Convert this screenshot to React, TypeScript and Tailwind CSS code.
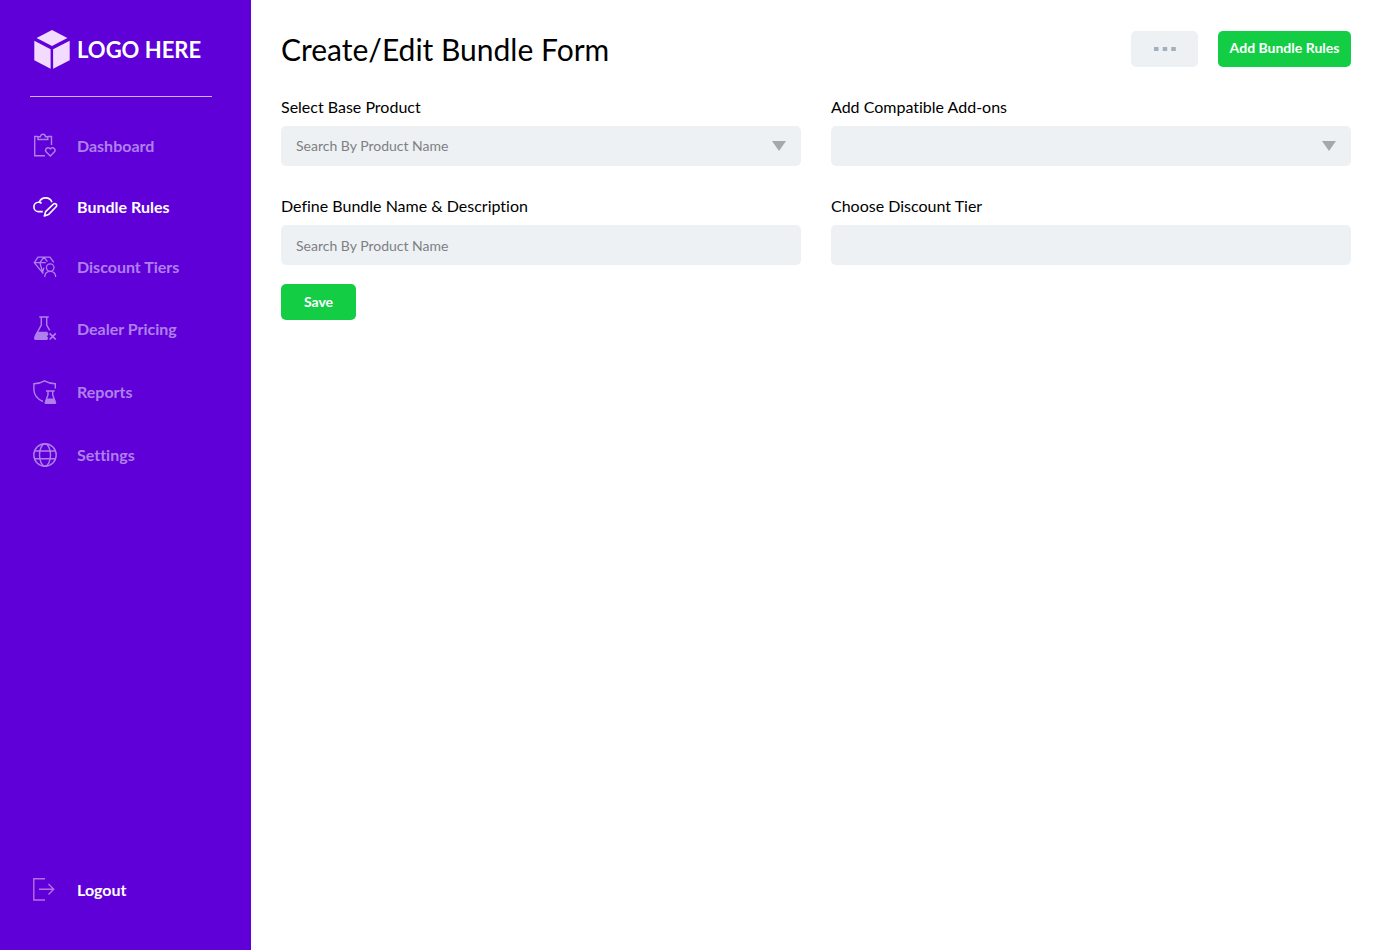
import clsx from 'clsx'
import React, { useState } from 'react'

interface NavItem {
	id: string
	label: string
	icon: React.ReactNode
}

const ClipboardHeartIcon = () => (
	<svg width="25" height="25" viewBox="0 0 25 25" fill="none" stroke="currentColor" strokeWidth="1.4" aria-hidden="true">
		<path d="M5 3.5H1.7v19.200h10.2M14.6 3.5h3.9v8.4" />
		<path d="M5 6.5V3.8h2.4a2.5 2.5 0 0 1 5 0h2.4v2.7z" />
		<path d="M17.3 23l-4-3.9a2.7 2.7 0 0 1 0-3.6 2.6 2.6 0 0 1 4 .3 2.6 2.6 0 0 1 4-.3 2.7 2.7 0 0 1 0 3.6z" />
	</svg>
)

const CloudPencilIcon = () => (
	<svg width="25" height="20" viewBox="0 0 25 20" fill="none" stroke="currentColor" strokeWidth="1.6" strokeLinejoin="round" aria-hidden="true">
		<path d="M9.8 14.6H5.7C2.9 14.6.9 12.5.9 9.9s2-4.7 4.6-4.7c1.3 0 2.3.4 3.1 1.1M6.3 5.3C7.2 2.7 9.6.9 12.6.9c3.1 0 5.4 1.6 6.3 4.3" />
		<path d="M11.4 18.9l1.2-4.3 7.8-7.5a1.9 1.9 0 0 1 2.7 0 1.9 1.9 0 0 1 0 2.7l-7.6 7.8z" />
	</svg>
)

const DiamondUserIcon = () => (
	<svg width="25" height="21" viewBox="0 0 25 21" fill="none" stroke="currentColor" strokeWidth="1.3" aria-hidden="true">
		<path d="M10.6 17.2L9.4 16.6 1.3 6.7 5 1.1h12l3.8 5.2M1.3 6.7h11.5M11 1.1L6.9 6.7l2.7 9.6 1.3-4.5M11 1.1l3.4 4.5" />
		<circle cx="17.2" cy="11.6" r="3.8" />
		<path d="M11.7 21c.2-3.3 2.4-5.6 5.5-5.6s5.3 2.3 5.5 5.6" />
	</svg>
)

const FlaskCrossIcon = () => (
	<svg width="25" height="25" viewBox="0 0 25 25" fill="none" stroke="currentColor" strokeWidth="1.4" aria-hidden="true">
		<path d="M6.3 1h9.4M8.3 1v8L2 20.5M13.7 1v8l3 5.4" />
		<path d="M4 15.8h10.3l1.1 2.5-1.4 2.2 1.2 1.3-.9 2.2H2.8c-1.6 0-2.3-1.5-1.5-2.9z" fill="currentColor" stroke="none" />
		<path d="M16.6 17.3l6.2 6.2M22.8 17.3l-6.2 6.2" strokeWidth="1.7" />
	</svg>
)

const ShieldFlaskIcon = () => (
	<svg width="25" height="24" viewBox="0 0 25 24" fill="none" stroke="currentColor" strokeWidth="1.4" aria-hidden="true">
		<path d="M9.9 21.5C4 18.7.9 14.5.9 9.5V3.8C4.9 3.8 8 3 11.6.9 15.2 3 18.2 3.8 22.3 3.8V8.5" />
		<path d="M13 11h8.7M15 11v3.8l-2.4 6.7M19.7 11v3.8l2.4 6.7" />
		<path d="M13.7 18.4h7.3l2.2 4.1c.2.8-.2 1.4-.9 1.4h-9.9c-.7 0-1.1-.6-.9-1.4z" fill="currentColor" stroke="none" />
	</svg>
)

const GlobeIcon = () => (
	<svg width="25" height="24" viewBox="0 0 25 24" fill="none" stroke="currentColor" strokeWidth="1.4" aria-hidden="true">
		<circle cx="12" cy="12" r="11.2" />
		<ellipse cx="12" cy="12" rx="5.5" ry="11.2" />
		<path d="M1.4 8h21.2M1.4 15.7h21.2" />
	</svg>
)

const LogoutIcon = () => (
	<svg width="25" height="24" viewBox="0 0 25 24" fill="none" stroke="currentColor" strokeWidth="1.4" aria-hidden="true">
		<path d="M12 .8H.8V22H12M6 11.2h15M15.5 6l5.2 5.2-5.2 5.2" />
	</svg>
)

const CubeLogo = () => (
	<svg width="36" height="39" viewBox="0 0 36 39" fill="#f3dbff" aria-hidden="true">
		<path d="M18 0l15.4 7.9L18 16 2.6 7.9z" />
		<path d="M.3 10.8l16.3 8.4v19.5L.3 30.3z" />
		<path d="M35.7 10.8l-16.6 8.4v19.5l16.6-8.4z" />
	</svg>
)

const navItems: NavItem[] = [
	{ id: 'dashboard', label: 'Dashboard', icon: <ClipboardHeartIcon /> },
	{ id: 'bundle-rules', label: 'Bundle Rules', icon: <CloudPencilIcon /> },
	{ id: 'discount-tiers', label: 'Discount Tiers', icon: <DiamondUserIcon /> },
	{ id: 'dealer-pricing', label: 'Dealer Pricing', icon: <FlaskCrossIcon /> },
	{ id: 'reports', label: 'Reports', icon: <ShieldFlaskIcon /> },
	{ id: 'settings', label: 'Settings', icon: <GlobeIcon /> }
]

const fieldClass = 'h-10 w-full rounded-[5px] bg-[#edf1f4] px-[15px] text-sm text-[#7d8083] placeholder:text-[#7d8083]'

const Field = ({ id, label, children }: { id: string, label: string, children: React.ReactNode }) => (
	<div className="flex flex-col gap-[9px]">
		<label htmlFor={id} className="text-base leading-5">{label}</label>
		{children}
	</div>
)

const SelectBox = ({ id, options }: { id: string, options: string[] }) => (
	<div className="relative">
		<select id={id} className={clsx(fieldClass, 'appearance-none')}>
			{options.map(option => <option key={option}>{option}</option>)}
		</select>
		<svg className="pointer-events-none absolute right-[15px] top-[15px]" width="14" height="10" viewBox="0 0 14 10" fill="#a5a9ab" aria-hidden="true">
			<path d="M0 0h14L7 10z" />
		</svg>
	</div>
)

const Sidebar = () => {
	const [active, setActive] = useState('bundle-rules')

	return (
		<aside className="flex w-[251px] shrink-0 flex-col bg-[#5f00d9] px-[30px] pt-[30px] pb-12 font-bold text-white">
			<div className="mr-[9px] flex items-center gap-[7px] border-b border-[#cfb2f4] pb-[27px] pl-1">
				<CubeLogo />
				<span className="text-[22px] leading-7">LOGO HERE</span>
			</div>
			<nav className="mt-9 flex flex-col gap-[39px] pl-[3px]">
				{navItems.map(item => (
					<a
						key={item.id}
						href={`#${item.id}`}
						aria-current={active === item.id ? 'page' : undefined}
						className={clsx('flex items-center gap-[19px] leading-5', active === item.id ? 'text-white' : 'text-[#af80ec]')}
						onClick={() => setActive(item.id)}
					>
						{item.icon}
						{item.label}
					</a>
				))}
			</nav>
			<a href="#logout" className="mt-auto flex items-center gap-[19px] pl-[3px] leading-5">
				<span className="text-[#b86ee3]"><LogoutIcon /></span>
				Logout
			</a>
		</aside>
	)
}

const App: React.FC = () => (
	<div className="flex min-h-screen bg-white font-['Lato',sans-serif] text-black [font-variant-ligatures:no-common-ligatures]">
		<Sidebar />
		<main className="min-w-0 flex-1 px-[30px] pt-[31px]">
			<header className="flex items-start justify-between">
				<h1 className="text-[30px] leading-9">Create/Edit Bundle Form</h1>
				<div className="flex gap-5">
					<button type="button" aria-label="More actions" className="flex h-9 w-[67px] items-center justify-center rounded-[5px] bg-[#edf1f4]">
						<svg width="22" height="4" viewBox="0 0 22 4" fill="#a1b0be" aria-hidden="true">
							<path d="M0 0h4.5v4H0zM8.7 0h4.5v4H8.7zM17.3 0h4.5v4h-4.5z" />
						</svg>
					</button>
					<button type="button" className="h-9 w-[133px] rounded-[5px] bg-[#13ce45] pb-0.5 text-sm font-bold text-white">
						Add Bundle Rules
					</button>
				</div>
			</header>
			<form className="mt-[30px]" onSubmit={e => e.preventDefault()}>
				<div className="grid grid-cols-2 gap-[30px]">
					<Field id="base-product" label="Select Base Product">
						<SelectBox id="base-product" options={['Search By Product Name']} />
					</Field>
					<Field id="add-ons" label="Add Compatible Add-ons">
						<SelectBox id="add-ons" options={['']} />
					</Field>
					<Field id="bundle-name" label="Define Bundle Name & Description">
						<input id="bundle-name" type="text" placeholder="Search By Product Name" className={fieldClass} />
					</Field>
					<Field id="discount-tier" label="Choose Discount Tier">
						<input id="discount-tier" type="text" className={fieldClass} />
					</Field>
				</div>
				<button type="submit" className="mt-[19px] h-9 w-[75px] rounded-[5px] bg-[#13ce45] text-sm font-bold text-white">
					Save
				</button>
			</form>
		</main>
	</div>
)

export default App
